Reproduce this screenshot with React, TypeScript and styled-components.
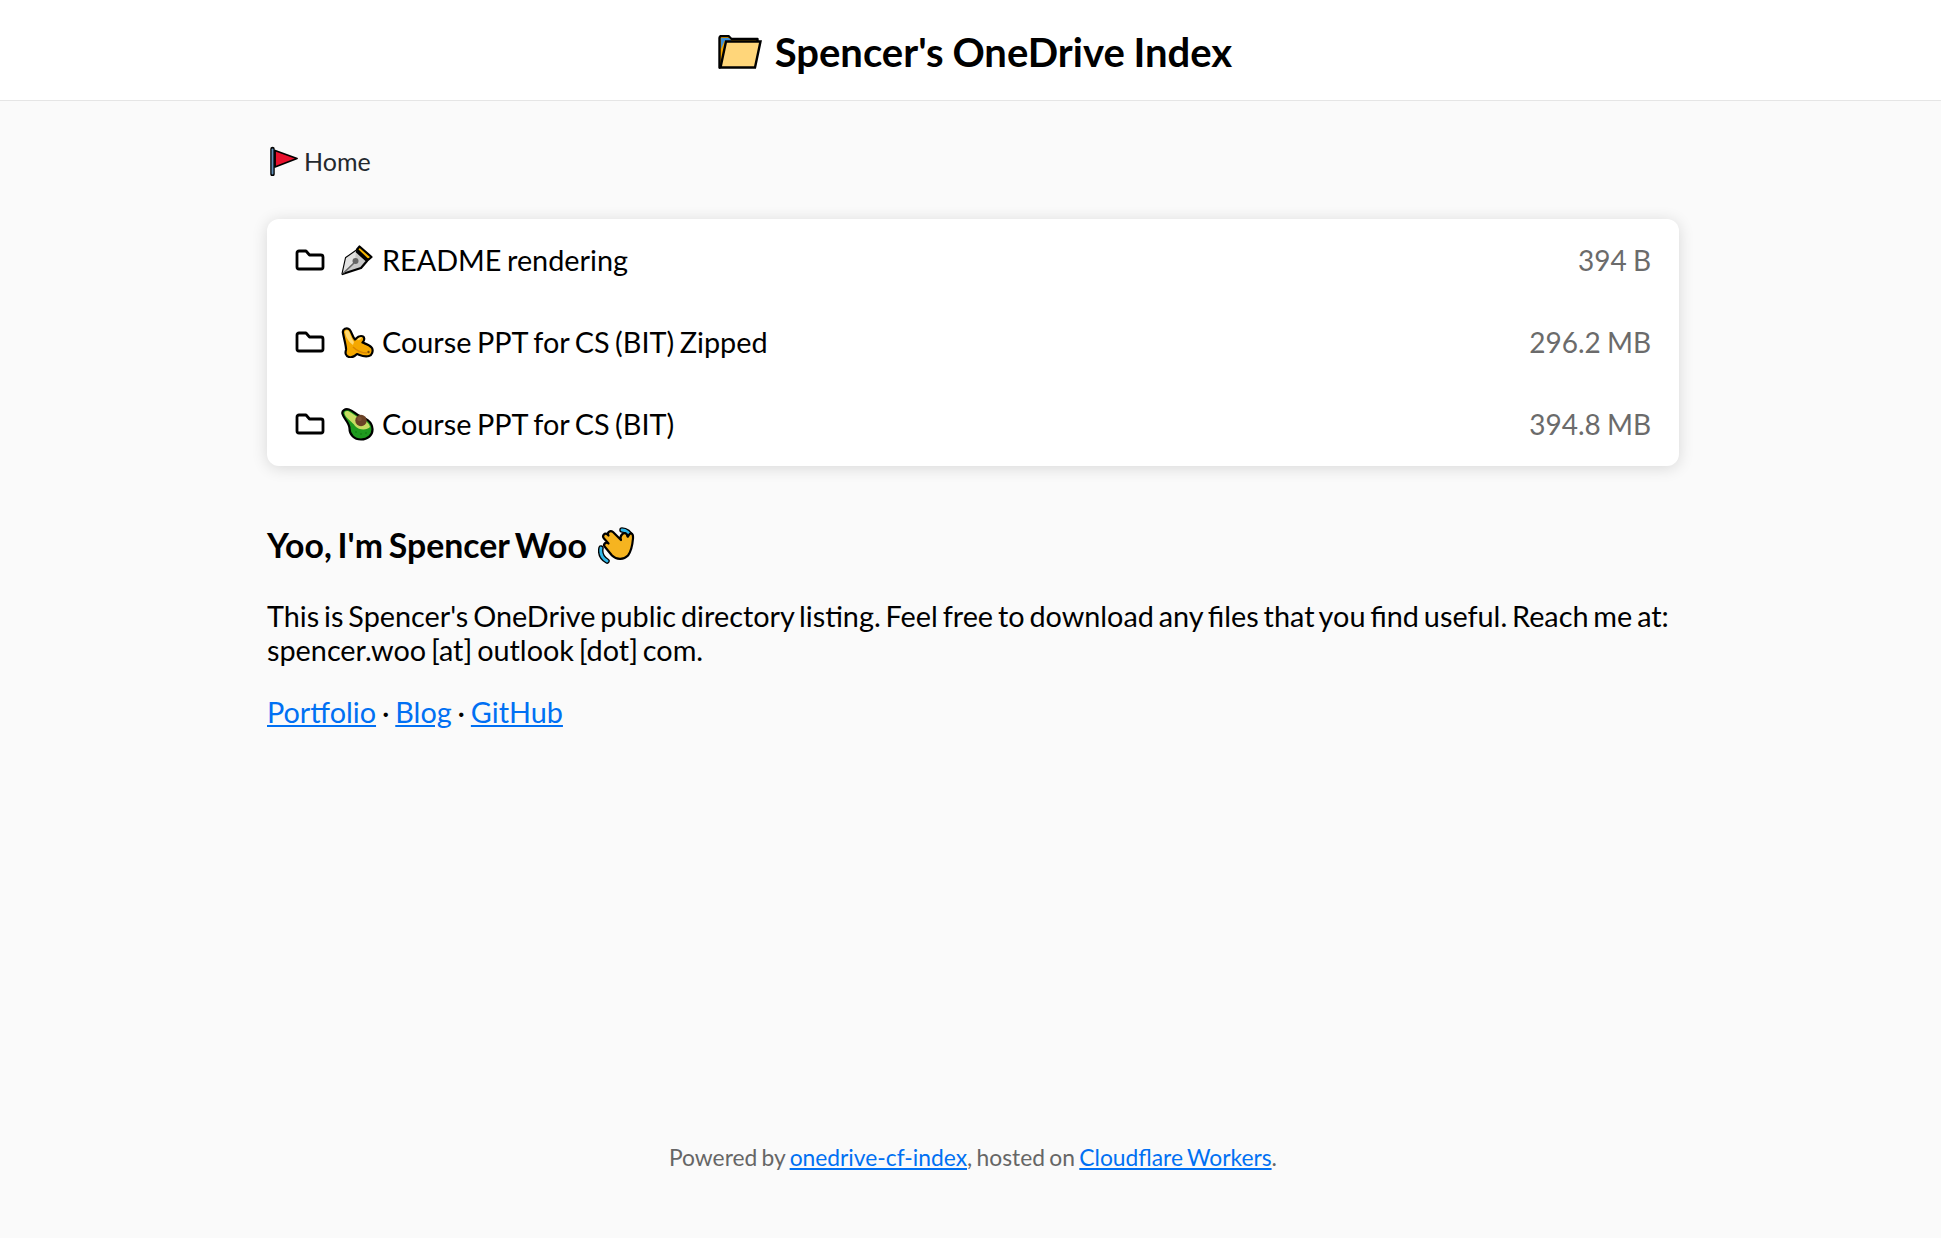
import * as React from "react";
import styled, { createGlobalStyle } from "styled-components";

const GlobalStyle = createGlobalStyle`
  html, body { margin: 0; padding: 0; }
  body {
    background: #fafafa;
    color: #000;
    font-family: Lato, "Liberation Sans", sans-serif;
  }
  a { color: #0070f3; text-decoration: underline; }
`;

const Page = styled.div`
  display: flex;
  flex-direction: column;
  min-height: 1238px;
`;

const Header = styled.header`
  height: 101px;
  box-sizing: border-box;
  padding: 3px 0 0 9px;
  background: #fff;
  border-bottom: 1px solid #e5e5e5;
  display: flex;
  align-items: center;
  justify-content: center;
  gap: 13px;
`;

const Title = styled.h1`
  margin: 0;
  font-size: 40px;
  line-height: 48px;
  font-weight: 700;
  word-spacing: -1px;
`;

const Main = styled.main`
  flex: 1;
  width: 1412px;
  margin-left: 267px;
  display: flex;
  flex-direction: column;
`;

const Crumbs = styled.nav`
  display: flex;
  align-items: center;
  gap: 6px;
  height: 32px;
  margin-top: 44px;
  padding-left: 1px;
  font-size: 25px;
  color: #24292e;
`;

const Card = styled.section`
  margin-top: 42px;
  background: #fff;
  border-radius: 12px;
  box-shadow: 0 2px 16px rgba(0, 0, 0, 0.14);
  padding: 0 28px;
  height: 247px;
  box-sizing: border-box;
  display: flex;
  flex-direction: column;
`;

const Row = styled.div`
  height: 82px;
  display: flex;
  align-items: center;
`;

const FolderSlot = styled.span`
  width: 46px;
  display: flex;
  align-items: center;
`;

const EmojiSlot = styled.span`
  width: 41px;
  display: flex;
  align-items: center;
`;

const Name = styled.span`
  flex: 1;
  font-size: 28.8px;
  word-spacing: -1.8px;
`;

const Size = styled.span`
  font-size: 28px;
  word-spacing: -1px;
  color: #6b6b6b;
`;

const Readme = styled.article`
  margin-top: 59px;
`;

const Heading = styled.h2`
  margin: 0;
  display: flex;
  align-items: center;
  gap: 11px;
  font-size: 33.8px;
  line-height: 40px;
  font-weight: 700;
  word-spacing: -2.5px;
`;

const Para = styled.p`
  margin: 34px 0 0;
  font-size: 28.8px;
  line-height: 34px;
  word-spacing: -2.5px;
`;

const Links = styled.p`
  margin: 28px 0 0;
  font-size: 28.8px;
  line-height: 34px;
  word-spacing: -1.5px;
`;

const Footer = styled.footer`
  height: 95px;
  padding-left: 5px;
  text-align: center;
  font-size: 22.8px;
  line-height: 28px;
  word-spacing: -1.5px;
  color: #666;
`;

const FolderOutline = () => (
  <svg width="30" height="24" viewBox="0 0 30 24" fill="none">
    <path d="M2 5a2 2 0 0 1 2-2h7l3.5 4H26a2 2 0 0 1 2 2v10a2 2 0 0 1-2 2H4a2 2 0 0 1-2-2z" stroke="#000" strokeWidth="2.8" strokeLinejoin="round" />
  </svg>
);

const OpenFolder = () => (
  <svg width="44" height="34" viewBox="0 0 44 34">
    <path d="M1.5 32.5V3a2 2 0 0 1 2-2h7l3 3h26v5z" fill="#f4a600" stroke="#000" strokeWidth="2.4" strokeLinejoin="round" />
    <path d="M3 3h8l2.500 3H6.500L3 14z" fill="#3d8fd6" />
    <path d="M8 6.500h34.500L37 32.500H2.500z" fill="#ffd67a" stroke="#000" strokeWidth="2.400" />
  </svg>
);

const Flag = () => (
  <svg width="30" height="30" viewBox="0 0 30 30">
    <path d="M4.500 3v25" stroke="#000" strokeWidth="4.500" strokeLinecap="round" />
    <path d="M4.500 3.500v24" stroke="#5f8fb8" strokeWidth="1.800" strokeLinecap="round" />
    <path d="M7 4.500 L29 12.500 L7 21z" fill="#e8112d" stroke="#000" strokeWidth="1.800" strokeLinejoin="round" />
  </svg>
);

const Pen = () => (
  <svg width="32" height="31" viewBox="0 0 32 31">
    <path d="M1.500 29 L5 13 L15 6 L26 16 L20 23z" fill="#c8c8c8" stroke="#000" strokeWidth="2.200" strokeLinejoin="round" />
    <path d="M1.500 29 L5 13 L15 6 L14 16z" fill="#e2e2e2" />
    <path d="M16 4.500 L18.500 1.500 L30.500 12 L27 15z" fill="#f4b400" stroke="#000" strokeWidth="2.200" strokeLinejoin="round" />
    <path d="M2.500 28 L13 18" stroke="#666" strokeWidth="1.600" />
    <circle cx="14.500" cy="16" r="3" fill="#666" />
  </svg>
);

const Banana = () => (
  <svg width="33" height="31" viewBox="0 0 33 31">
    <path d="M2 6C1 2 6 0 8.500 2.500 11 5 11 9 14 12.500 15.500 11 17 9 20 9c4 0 4 4 1.500 6.500 3.500 1.500 7.500 2.500 9.500 5.500 1.500 3 0 7.500-3 8-5 1.500-9-1-12-2-2 2-5 4-8 3-3.500-1-4-4-3-7C5.500 20 3 12 2 6z" fill="#f5a800" stroke="#000" strokeWidth="2.200" strokeLinejoin="round" />
    <path d="M4 5c0-2 3-2.500 4-.5 1.500 3 3 8 5 10.500l-1 3C8 15 4.500 10 4 5z" fill="#ffd870" />
    <path d="M16 13c1-2 3-3 5-2.500-1 2-3 3-5 2.500z" fill="#ffd870" />
    <path d="M12 20c3 3 8 6 14 6" fill="none" stroke="#d98600" strokeWidth="1.500" />
    <circle cx="27.500" cy="25" r="1.200" fill="#7a4a00" />
  </svg>
);

const Avocado = () => (
  <svg width="33" height="33" viewBox="0 0 33 33">
    <path d="M1.500 6C0.500 2.500 4 0.500 8 1.500c4 1 7 5 11 6.500 5 2 12 5 12.500 13 .3 6.500-5 10.500-11.500 10.500-7 0-11.500-5-11.500-11C8.500 15 3 11 1.500 6z" fill="#1f9a1f" stroke="#000" strokeWidth="2.200" strokeLinejoin="round" />
    <path d="M3.500 5.500C3.500 3 6 2.500 8 3.500c4 2 7 5 10.500 6.500 4 1.500 9 3.500 10.500 9-3 3.500-11 3.500-15-1C12 14 5 11 3.500 5.500z" fill="#c6dc62" />
    <circle cx="20" cy="12.500" r="5.700" fill="#6b4226" />
    <circle cx="18.500" cy="11" r="2.300" fill="#7d5233" />
    <circle cx="20" cy="26" r="0.700" fill="#0d6e0d" />
    <circle cx="25" cy="25" r="0.700" fill="#0d6e0d" />
    <circle cx="15" cy="24" r="0.700" fill="#0d6e0d" />
  </svg>
);

const Wave = () => (
  <svg width="38" height="38" viewBox="0 0 38 38">
    <path d="M3 22c-1 5 1 10 6 13M24 4c4 0 8 3 9 7" fill="none" stroke="#000" strokeWidth="5.500" strokeLinecap="round" />
    <path d="M3 22c-1 5 1 10 6 13M24 4c4 0 8 3 9 7" fill="none" stroke="#30b6e8" strokeWidth="2.800" strokeLinecap="round" />
    <path d="M7 21c-2.500-2.500 1-6 3.500-3.500L6 12.500C3.500 9.500 7 6 9.500 8.500l1 1C8.500 7 12 3.500 15 6l8 8c-1-2.500 0-5 2-6.500 3-1.500 4 1 4.500 3 .5 1.500 1.500-4 4-3 2 .8 1.500 3 1.500 5-.5 6-2 13-5 17-4 4-11 5-16 0z" fill="#f6b420" stroke="#000" strokeWidth="2.200" strokeLinejoin="round" />
  </svg>
);

const rows = [
  { icon: <Pen />, name: "README rendering", size: "394 B" },
  { icon: <Banana />, name: "Course PPT for CS (BIT) Zipped", size: "296.2 MB" },
  { icon: <Avocado />, name: "Course PPT for CS (BIT)", size: "394.8 MB" }
];

export default function App() {
  return (
    <Page>
      <GlobalStyle />
      <Header>
        <OpenFolder />
        <Title>Spencer's OneDrive Index</Title>
      </Header>
      <Main>
        <Crumbs>
          <Flag />
          <span>Home</span>
        </Crumbs>
        <Card>
          {rows.map((row) => (
            <Row key={row.name}>
              <FolderSlot>
                <FolderOutline />
              </FolderSlot>
              <EmojiSlot>{row.icon}</EmojiSlot>
              <Name>{row.name}</Name>
              <Size>{row.size}</Size>
            </Row>
          ))}
        </Card>
        <Readme>
          <Heading>
            Yoo, I'm Spencer Woo <Wave />
          </Heading>
          <Para>
            This is Spencer's OneDrive public directory listing. Feel free to download any files that you find useful. Reach me at: spencer.woo [at] outlook [dot] com.
          </Para>
          <Links>
            <a href="#portfolio">Portfolio</a> · <a href="#blog">Blog</a> · <a href="#github">GitHub</a>
          </Links>
        </Readme>
      </Main>
      <Footer>
        Powered by <a href="#index">onedrive-cf-index</a>, hosted on <a href="#workers">Cloudflare Workers</a>.
      </Footer>
    </Page>
  );
}
